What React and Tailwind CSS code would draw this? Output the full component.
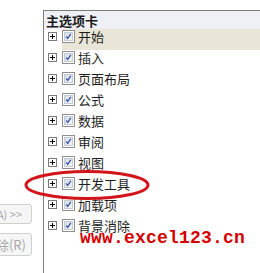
import React from "react";

const items = ["开始", "插入", "页面布局", "公式", "数据", "审阅", "视图", "开发工具", "加载项", "背景消除"];

function PlusBox() {
  return (
    <div className="w-[9px] h-[9px] border border-[#7a7a7a] bg-white flex items-center justify-center shrink-0">
      <svg width="7" height="7" viewBox="0 0 7 7">
        <rect x="1" y="3" width="5" height="1" fill="#000" />
        <rect x="3" y="1" width="1" height="5" fill="#000" />
      </svg>
    </div>
  );
}

function CheckBox() {
  return (
    <div className="w-[13px] h-[13px] border border-[#8f8f8f] bg-white p-[1px] shrink-0">
      <div className="w-full h-full bg-gradient-to-br from-[#d8dde6] to-[#f4f6f9] border border-[#c5cbd6] flex items-center justify-center">
        <svg width="9" height="9" viewBox="0 0 9 9">
          <path d="M1.5 4.5 L3.5 7 L7.5 1.2" stroke="#3a5aa8" strokeWidth="1.7" fill="none" />
        </svg>
      </div>
    </div>
  );
}

export default function App() {
  return (
    <div
      className="relative w-[260px] h-[273px] bg-white overflow-hidden flex"
      style={{ fontFamily: '"Noto Sans CJK SC", "Liberation Sans", sans-serif' }}
    >
      <div className="w-[43px] shrink-0 flex flex-col items-end pt-[204px] gap-[9px] pr-[11px]">
        <div className="w-[60px] h-[20px] border border-[#d0d0d0] rounded-[3px] bg-[#f6f6f6] flex items-center justify-end pr-[9px] text-[11px] text-[#a8a8a8] whitespace-nowrap">
          添加(A) &gt;&gt;
        </div>
        <div className="w-[60px] h-[23px] border border-[#d0d0d0] rounded-[3px] bg-[#f6f6f6] flex items-center justify-end pr-[5px] text-[13px] text-[#a8a8a8] whitespace-nowrap">
          删除(R)
        </div>
      </div>
      <div className="flex-1 mt-[10px] border-l border-t border-[#7d7d7d] flex flex-col">
        <div className="h-[18px] bg-[#eef0f5] pl-[2px] pt-[1px] text-[13px] font-bold text-[#1a1a1a] leading-[18px]">
          主选项卡
        </div>
        {items.map((t, i) => (
          <div key={t} className="h-[21px] flex items-start">
            <div className="h-[21px] pl-[4px] pr-[5px] pt-[3px] shrink-0">
              <PlusBox />
            </div>
            <div className={"h-[21px] flex-1 flex items-start pt-[1px] gap-[3px] " + (i === 0 ? "bg-[#e9e6d7]" : "")}>
              <CheckBox />
              <span className="text-[13px] leading-[14px] text-[#1e1e1e]">{t}</span>
            </div>
          </div>
        ))}
      </div>
      <svg className="absolute left-0 top-0 pointer-events-none" width="260" height="273">
        <ellipse cx="87" cy="185" rx="61" ry="13.5" fill="none" stroke="#d2141b" strokeWidth="3" />
      </svg>
      <div
        className="absolute left-[80px] top-[229px] text-[18px] leading-[18px] font-bold text-[#d40000] tracking-[0.2px]"
        style={{ fontFamily: '"Liberation Mono", monospace' }}
      >
        www.excel123.cn
      </div>
    </div>
  );
}
